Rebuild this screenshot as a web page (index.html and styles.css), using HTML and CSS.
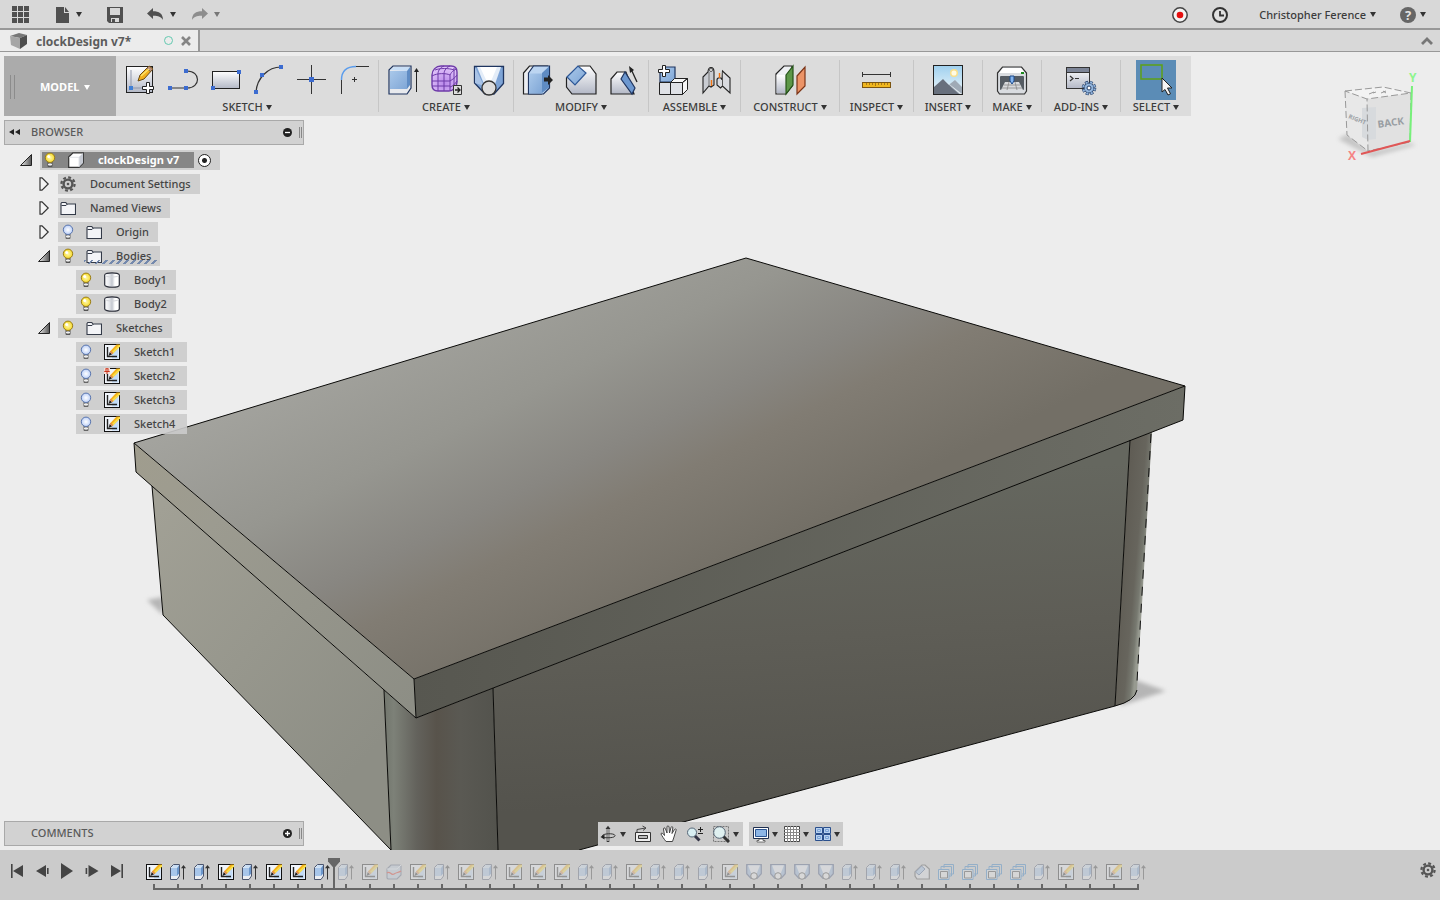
FILE: index.html
```html
<!DOCTYPE html>
<html lang="en">
<head>
<meta charset="utf-8">
<title>clockDesign v7*</title>
<link rel="stylesheet" href="styles.css">
</head>
<body>
<svg class="defs" aria-hidden="true">
  <defs>
    <linearGradient id="g-blue" x1="0" y1="0" x2="1" y2="1"><stop offset="0" stop-color="#a9c8ea"/><stop offset="1" stop-color="#7fa6d6"/></linearGradient>
    <linearGradient id="g-pale" x1="0" y1="0" x2="0" y2="1"><stop offset="0" stop-color="#ffffff"/><stop offset="1" stop-color="#b3b8c6"/></linearGradient>
    <linearGradient id="g-sky" x1="0" y1="0" x2="0" y2="1"><stop offset="0" stop-color="#9fd0ee"/><stop offset="1" stop-color="#eef7fb"/></linearGradient>
    <linearGradient id="g-cyl" x1="0" y1="0" x2="1" y2="0"><stop offset="0" stop-color="#fff"/><stop offset=".3" stop-color="#e8eaee"/><stop offset=".5" stop-color="#c3c7cf"/><stop offset=".7" stop-color="#fff"/></linearGradient>
    <linearGradient id="g-tri" x1="0" y1="0" x2="1" y2="0"><stop offset="0" stop-color="#eee"/><stop offset="1" stop-color="#555"/></linearGradient>
    <radialGradient id="g-lit"><stop offset="0" stop-color="#fff9b0"/><stop offset="1" stop-color="#f6d929"/></radialGradient>
    <radialGradient id="g-off"><stop offset="0" stop-color="#ffffff"/><stop offset="1" stop-color="#bcd0f8"/></radialGradient>
    <radialGradient id="g-purple" cx=".5" cy=".7" r=".7"><stop offset="0" stop-color="#b887ea"/><stop offset="1" stop-color="#e2c6fa"/></radialGradient>
  </defs>
  <symbol id="i-sketch" viewBox="0 0 16 16"><rect x=".5" y=".5" width="15" height="15" fill="#f1f5fb" stroke="#111"/><path d="M8 14.500V9l6.500-5v10.500z" fill="#c3dcf7"/><path d="M3.500 3v9.500H13" fill="none" stroke="#222" stroke-width="1.400"/><path d="M4.500 12l1.200-4 2.600 2.200z" fill="#222"/><path d="M6 7.500L12.500.5H16v2L8.500 10z" fill="#f5b21a"/><path d="M7.200 8.700L15 1h1v1.500L8.500 10z" fill="#f9e04a"/><path d="M5.700 8l1.100-1.300 2.600 2.400-1.300 1.200z" fill="#dd8a50"/></symbol>
  <symbol id="i-extrude" viewBox="0 0 16 16"><path d="M.5 3.500l3-3h6v11.500l-2.500 3.500H.5z" fill="#eceef2" stroke="#4b556e"/><path d="M1 4h6v8H1z" fill="#a8c6ea"/><path d="M1.300 3.800L3.700 1h5.200L7 3.800z" fill="#c9def5"/><path d="M7 4l2-2.700v8.500L7 12z" fill="#6c97cb"/><path d="M13.500 2v13.500" stroke="#333"/><path d="M11 4.200L13.500 1 16 4.200z" fill="#333"/></symbol>
  <symbol id="i-loft" viewBox="0 0 16 16"><path d="M.7.7h14.600v9L11 14.500H5L.7 9.700z" fill="#8fb0dc" stroke="#3b4d78" stroke-width="1.200"/><path d="M2 1.300h12L10.500 10h-5z" fill="#edf3fb"/><circle cx="8" cy="12" r="3.300" fill="#f4f4f4" stroke="#333"/></symbol>
  <symbol id="i-form" viewBox="0 0 16 16"><path d="M1 5l4-4h9l1 1v9l-4 4H2l-1-1z" fill="#bccce0" stroke="#55617a" stroke-width="1.100"/><path d="M1 5h10l4-4" fill="none" stroke="#e9f0fa"/><path d="M1 9c3-3 4 3 7 1s4-1 7-3" fill="none" stroke="#e0210d" stroke-width="1.200"/></symbol>
  <symbol id="i-fillet" viewBox="0 0 16 16"><path d="M1 8l7-7h3l4.300 4v10H3l-2-3z" fill="#e3e5ea" stroke="#444" stroke-width="1.200"/><path d="M1.500 8l6-6L11 5l-6 6z" fill="#9fc0e8" stroke="#3b5b90"/></symbol>
  <symbol id="i-pattern" viewBox="0 0 16 16"><path d="M6 4V.5h9.500V10H12" fill="none" stroke="#2277c4"/><path d="M3 5.500v-3h10.500V12H11" fill="none" stroke="#2277c4"/><path d="M.5 5.500h10.500v10H.5z" fill="#d9e4f0" stroke="#2277c4"/><path d="M2.500 7.500h7v6.500h-7z" fill="#eee" stroke="#333"/></symbol>
  <symbol id="i-lit" viewBox="0 0 16 16"><path d="M6 10h4v4.500H6z" fill="#aaa" stroke="#555"/><path d="M6 12.500h4" stroke="#eee"/><circle cx="8" cy="5.800" r="4.700" fill="url(#g-lit)" stroke="#9a7d18"/><circle cx="6.700" cy="4.500" r="1.500" fill="#fff"/></symbol>
  <symbol id="i-off" viewBox="0 0 16 16"><path d="M6 10h4v4.500H6z" fill="#bbb" stroke="#666"/><path d="M6 12.500h4" stroke="#eee"/><circle cx="8" cy="5.800" r="4.700" fill="url(#g-off)" stroke="#5a76ae"/></symbol>
  <symbol id="i-folder" viewBox="0 0 16 16"><path d="M1 3.500l.8-1h4l1 1.500h8.700v10.500H1z" fill="#f3f4f7" stroke="#333a48" stroke-width="1.100"/><path d="M1.500 5.500h4.500L7.500 4" fill="none" stroke="#333a48"/></symbol>
  <symbol id="i-cyl" viewBox="0 0 16 16"><path d="M.7 3C.7.2 15.300.2 15.300 3v10c0 3-14.600 3-14.600 0z" fill="url(#g-cyl)" stroke="#2c2f3a" stroke-width="1.200"/><path d="M1.200 3.500c2 2 11.600 2 13.600 0" fill="none" stroke="#d3d5da"/></symbol>
  <symbol id="i-box" viewBox="0 0 16 16"><path d="M.7 5L5 .8h10.300V11L11 15.300H.7z" fill="#fff" stroke="#333" stroke-width="1.200"/><path d="M11 5l4-4v10l-4 4z" fill="#c6cad3"/><path d="M1.300 5.300H11v9.500" fill="none" stroke="#e2e4e8"/></symbol>
  <symbol id="i-gear" viewBox="0 0 16 16"><circle cx="8" cy="8" r="6.600" fill="none" stroke="#555" stroke-width="2.200" stroke-dasharray="2.900 2.280"/><circle cx="8" cy="8" r="4.400" fill="none" stroke="#555" stroke-width="2.400"/><circle cx="8" cy="8" r="1.300" fill="#555"/></symbol>
  <symbol id="i-open" viewBox="0 0 12 12"><path d="M.5 11.500L11.500.5v11z" fill="url(#g-tri)" stroke="#222"/></symbol>
  <symbol id="i-closed" viewBox="0 0 10 14"><path d="M1 .8h2L9.200 7 3 13.200H1z" fill="#f4f4f4" stroke="#333" stroke-width="1.200"/></symbol>
</svg>

<header class="topbar">
  <button class="tool t-grid" aria-label="Data panel"><svg width="17" height="17" viewBox="0 0 17 17"><path d="M0 0h5v5H0zM6 0h5v5H6zM12 0h5v5h-5zM0 6h5v5H0zM6 6h5v5H6zM12 6h5v5h-5zM0 12h5v5H0zM6 12h5v5H6zM12 12h5v5h-5z" fill="#505050"/></svg></button>
  <button class="tool t-file caret" aria-label="File"><svg width="14" height="16" viewBox="0 0 14 16"><path d="M0 0h8v6h5v10H0z" fill="#505050"/><path d="M9 0l4 5H9z" fill="#505050"/></svg></button>
  <button class="tool t-save" aria-label="Save"><svg width="16" height="16" viewBox="0 0 16 16"><path d="M0 0h16v16H2l-2-2z" fill="#505050"/><path d="M3 1h10v7H3zM4 11h8v4H4z" fill="#d8d8d8"/><path d="M5 12h3v3H5z" fill="#505050"/></svg></button>
  <button class="tool t-undo caret" aria-label="Undo"><svg width="17" height="13" viewBox="0 0 17 13"><path d="M6 0v3.200c6 0 10 2.200 10 8.800-2-3.400-5-4.300-10-4.200V11L0 5.500z" fill="#505050"/></svg></button>
  <button class="tool caret faint" aria-label="Redo"><svg width="17" height="13" viewBox="0 0 17 13"><path d="M11 0v3.200C5 3.200 1 5.400 1 12c2-3.400 5-4.300 10-4.200V11l6-5.500z" fill="#8d8d8d"/></svg></button>
  <div class="account">
    <button class="tool" aria-label="Record"><svg width="16" height="16" viewBox="0 0 16 16"><circle cx="8" cy="8" r="7.200" fill="#f4f4f4" stroke="#444" stroke-width="1.500"/><circle cx="8" cy="8" r="3.300" fill="#e60f0f"/></svg></button>
    <button class="tool t-clock" aria-label="Job status"><svg width="16" height="16" viewBox="0 0 16 16"><circle cx="8" cy="8" r="7" fill="#e0e0e0" stroke="#333" stroke-width="2"/><path d="M8 4v4.500h4" fill="none" stroke="#333" stroke-width="1.800"/></svg></button>
    <button class="tool t-user caret">Christopher Ference</button>
    <button class="tool caret t-help" aria-label="Help"><span class="help">?</span></button>
  </div>
</header>

<nav class="tabs">
  <div class="tab">
    <svg width="17" height="16" viewBox="0 0 17 16"><path d="M0 3l9-3 8 2-7 3z" fill="#777"/><path d="M0 3l10 2v11L1 12z" fill="#a6a6a6"/><path d="M10 5l7-3v9l-7 5z" fill="#4e4e4e"/></svg>
    <span class="tab-name">clockDesign v7*</span>
    <span class="status"></span>
    <button class="close" aria-label="Close tab"><svg width="10" height="10" viewBox="0 0 10 10"><path d="M1 1l8 8M9 1L1 9" stroke="#858585" stroke-width="2.600"/></svg></button>
  </div>
  <button class="collapse" aria-label="Collapse"><svg width="12" height="8" viewBox="0 0 12 8"><path d="M1 7l5-5 5 5" fill="none" stroke="#777" stroke-width="2.800"/></svg></button>
</nav>

<main class="viewport">
  <svg class="scene" viewBox="0 52 1440 798" preserveAspectRatio="xMidYMid slice" aria-hidden="true">
    <defs>
      <linearGradient id="s-top" gradientUnits="userSpaceOnUse" x1="390" y1="315" x2="554" y2="651"><stop offset="0" stop-color="#a4a49f"/><stop offset=".35" stop-color="#969690"/><stop offset=".58" stop-color="#888681"/><stop offset=".72" stop-color="#817c73"/><stop offset="1" stop-color="#736f66"/></linearGradient>
      <linearGradient id="s-lidl" gradientUnits="userSpaceOnUse" x1="134" y1="440" x2="416" y2="700"><stop offset="0" stop-color="#a09d8e"/><stop offset=".3" stop-color="#9c9b90"/><stop offset="1" stop-color="#8d8e85"/></linearGradient>
      <linearGradient id="s-lidf" gradientUnits="userSpaceOnUse" x1="414" y1="0" x2="1185" y2="0"><stop offset="0" stop-color="#575750"/><stop offset="1" stop-color="#6c6d65"/></linearGradient>
      <linearGradient id="s-left" gradientUnits="userSpaceOnUse" x1="150" y1="520" x2="390" y2="730"><stop offset="0" stop-color="#a1a095"/><stop offset="1" stop-color="#8d8e85"/></linearGradient>
      <linearGradient id="s-front" gradientUnits="userSpaceOnUse" x1="850" y1="480" x2="870" y2="790"><stop offset="0" stop-color="#65675f"/><stop offset=".5" stop-color="#5e5d56"/><stop offset="1" stop-color="#54534d"/></linearGradient>
      <linearGradient id="s-curve" gradientUnits="userSpaceOnUse" x1="386" y1="0" x2="496" y2="0"><stop offset="0" stop-color="#74786f"/><stop offset=".07" stop-color="#7d8178"/><stop offset=".28" stop-color="#63625c"/><stop offset=".46" stop-color="#58534b"/><stop offset=".68" stop-color="#5a5953"/><stop offset="1" stop-color="#53534d"/></linearGradient>
      <linearGradient id="s-curver" gradientUnits="userSpaceOnUse" x1="1122" y1="560" x2="1145" y2="562"><stop offset="0" stop-color="#605d55"/><stop offset=".6" stop-color="#67655d"/><stop offset=".85" stop-color="#777970"/><stop offset="1" stop-color="#979a90"/></linearGradient>
      <filter id="blur"><feGaussianBlur stdDeviation="2"/></filter>
    </defs>
    <path d="M147 600l16-3v18zM1130 678l36 13-46 15z" fill="#b5b5b5" filter="url(#blur)"/>
    <path d="M152 486l11 129 228 235-7-160z" fill="url(#s-left)"/>
    <path d="M384 690l32 28 77-30 5 162H391z" fill="url(#s-curve)"/>
    <path d="M493 688L1130 440 1115 706 579 850h-81z" fill="url(#s-front)"/>
    <path d="M1130 440l22-8-15 258q-2 11-22 16z" fill="url(#s-curver)"/>
    <path d="M134 443l280 236 2 39L136 472z" fill="url(#s-lidl)"/>
    <path d="M414 679l771-293-2 34L416 718z" fill="url(#s-lidf)"/>
    <path d="M134 443l612-185 439 128-771 293z" fill="url(#s-top)"/>
    <path d="M134 443l612-185 439 128-771 293zM134 443l2 29 280 246-2-39M416 718l767-298 2-34M152 486l11 129 228 235M384 690l7 160M493 688l5 162M1130 440l-15 266M579 850L1115 706q20-5 22-16" fill="none" stroke="#0a0a08"/>
    <path d="M1151 434l-14 248" fill="none" stroke="#111" stroke-dasharray="9 8"/>
  </svg>

  <div class="viewcube">
    <svg width="90" height="100" viewBox="1335 66 90 100" role="img" aria-label="View cube">
      <path d="M1338 139l10-5 22 18 40-9 6 2-44 12z" fill="#c4c4c4" filter="url(#blur)"/>
      <path d="M1345 91l38-4 28 6-43 6z" fill="#f3f3f3"/><path d="M1345 91l22 8 1 52-21-16z" fill="#e8e8e8"/><path d="M1367 99l44-6-1 49-42 9z" fill="#e1e1e1"/>
      <path d="M1362 108l14-1v32l-8 1-6-3z" fill="#d7dadd"/>
      <path d="M1345 91l38-4 28 6-44 6zM1345 91l2 44 21 16-1-52M1411 93l-1 49-42 9" fill="none" stroke="#999" stroke-dasharray="7 3"/>
      <path d="M1369 94l5-2M1373 93l3-1M1381 93l5-2M1383 91l3 2" stroke="#999"/>
      <path d="M1412 86l-2 56" stroke="#77f07a" stroke-width="2"/><path d="M1361 154l49-13" stroke="#e05656" stroke-width="2"/>
      <text x="1409" y="82" class="axis" fill="#8df58d">Y</text><text x="1348" y="160" class="axis" fill="#f58484">X</text>
      <text class="face" transform="translate(1378 128) rotate(-8)">BACK</text>
      <text class="face small" transform="translate(1348 118) rotate(22)">RIGHT</text>
    </svg>
  </div>

  <div class="ribbon">
    <button class="workspace caret"><span class="grip"></span>MODEL</button>
    <section class="group w-sketch"><div class="icons">
      <button aria-label="Create sketch"><svg viewBox="0 0 32 32"><rect x="2.500" y="2.500" width="26" height="26" fill="url(#g-pale)" stroke="#222"/><path d="M7 6v18h15" fill="none" stroke="#8f97aa"/><path d="M5 22h4v4H5z" fill="#3f7fd6"/><path d="M14 17l2-6L25 2l4 3-9 10z" fill="#f2b01e" stroke="#6b4b13"/><path d="M25 2l4 3-2.500 2.500-4-3z" fill="#b98f7c" stroke="#6b4b13" stroke-width=".7"/><path d="M17 12L25 5" stroke="#fbe36b" stroke-width="1.500"/><path d="M22.500 18.500h3v4h4v3h-4v4h-3v-4h-4v-3h4z" fill="#fff" stroke="#222"/></svg></button>
      <button aria-label="Line"><svg viewBox="0 0 32 32"><path d="M3 24h17c14 0 14-17 0-17" fill="none" stroke="#333" stroke-width="1.200"/><path d="M1 22h4v4H1zM17 22h4v4h-4zM17 5h4v4h-4z" fill="#3c6cd0"/></svg></button>
      <button aria-label="Rectangle"><svg viewBox="0 0 32 32"><rect x="2.500" y="7.500" width="27" height="17" fill="url(#g-pale)" stroke="#222"/><path d="M1 22h4v4H1zM27 6h4v4h-4z" fill="#3c6cd0"/></svg></button>
      <button aria-label="Arc"><svg viewBox="0 0 32 32"><path d="M3 28C4 14 15 3 28 3" fill="none" stroke="#333" stroke-width="1.200"/><path d="M1 26h4v4H1zM7 9h4v4H7zM26 1h4v4h-4z" fill="#3c6cd0"/></svg></button>
      <button aria-label="Point"><svg viewBox="0 0 32 32"><path d="M15.500 1v29M1 15.500h29" stroke="#333"/><path d="M13 13h5v5h-5z" fill="#3c6cd0"/></svg></button>
      <button aria-label="Sketch fillet"><svg viewBox="0 0 32 32"><path d="M2.500 16v14M17 2.500h13M13 15.500h5M15.500 13v5" stroke="#333"/><path d="M2.500 16C2.500 7 7.500 2.500 17 2.500" fill="none" stroke="#5a9cec" stroke-width="1.400"/></svg></button>
    </div><button class="label caret">SKETCH</button></section>
    <section class="group w-three"><div class="icons">
      <button aria-label="Extrude"><svg viewBox="0 0 32 32"><path d="M2 6l4-4h18v22l-4 6H2z" fill="#e8eaee" stroke="#1f3560" stroke-width="1.200"/><path d="M3 7h17v18H3z" fill="url(#g-blue)"/><path d="M3 6l4-3h16l-3 4z" fill="#c8def6"/><path d="M20 7l3-4v18l-3 4z" fill="#5f8cc4"/><path d="M29.500 7v21" stroke="#222"/><path d="M27 8l2.500-4L32 8z" fill="#222"/></svg></button>
      <button aria-label="Create form"><svg viewBox="0 0 32 32"><path d="M2 11c0-5 4-9 9-9h10c4 0 6 2 6 6v10c0 5-4 9-8 9H8c-4 0-6-2-6-6z" fill="url(#g-purple)" stroke="#6d3aa8" stroke-width="1.400"/><path d="M2 12c5-3 14-3 18-1 2-4 4-5 7-6M20 11v15M8 10v17M14 10v17M2 17h18M2 22h18M20 17c3-2 5-3 7-6M20 23c3-1 5-3 7-6M5 6c5-2 14-2 19 0M8 10c0-4 3-7 6-8M14 10c0-4 3-7 6-8M24 4v19" fill="none" stroke="#6d3aa8"/><path d="M23.500 21.500h8v9h-8z" fill="#ddd" stroke="#333"/><path d="M25 26h5M27.500 23.500L30 26l-2.500 2.500" fill="none" stroke="#222" stroke-width="1.300"/></svg></button>
      <button aria-label="Loft"><svg viewBox="0 0 32 32"><path d="M1.500 2.500h29v17L21 30h-9L1.500 19z" fill="#7ea4d6" stroke="#1f3560" stroke-width="1.300"/><path d="M4 3h24l-6 17h-11z" fill="#e4edf8"/><path d="M7 3l9 19 8-19z" fill="#fff"/><path d="M2 3v16l9 3z" fill="#a9c3e6"/><circle cx="16" cy="24" r="7" fill="#ddd" stroke="#333" stroke-width="1.300"/></svg></button>
    </div><button class="label caret">CREATE</button></section>
    <section class="group w-three"><div class="icons">
      <button aria-label="Press pull"><svg viewBox="0 0 32 32"><path d="M1.500 9l6-7h18v22l-6 6h-18z" fill="#eceef2" stroke="#222" stroke-width="1.200"/><path d="M6.500 9l5-7h16v22l-6 6h-15z" fill="#bcd5f1" stroke="#1f3560" stroke-width="1.200"/><path d="M7 9.500h13v20H7z" fill="url(#g-blue)"/><path d="M20 9l7-6.500v21L20 29z" fill="#5f8cc4"/><path d="M22 13.500h4V11l5 5-5 5v-3.500h-4z" fill="#222"/></svg></button>
      <button aria-label="Fillet"><svg viewBox="0 0 32 32"><path d="M1.500 14L14 2h11l6 8v20H7l-5.500-7z" fill="url(#g-pale)" stroke="#222" stroke-width="1.200"/><path d="M2 13L13 2l8 7-11 12z" fill="url(#g-blue)" stroke="#2d5796" stroke-width="1.200"/></svg></button>
      <button aria-label="Draft"><svg viewBox="0 0 32 32"><path d="M3 15l6-7h9l8 22H3z" fill="url(#g-pale)" stroke="#222" stroke-width="1.200"/><path d="M13 15l4-7 10 16-3 6z" fill="#6d98d0" stroke="#1f3560" stroke-width="1.200"/><path d="M29 18L23 5" stroke="#222" stroke-width="1.300"/><path d="M21 2l5 4-4 3z" fill="#222"/></svg></button>
    </div><button class="label caret">MODIFY</button></section>
    <section class="group w-two"><div class="icons">
      <button aria-label="New component"><svg viewBox="0 0 32 32"><path d="M3 8l4-5h11v15H3z" fill="url(#g-blue)" stroke="#1f3560" stroke-width="1.200"/><path d="M2.500 18.500h11v12h-11zM13.500 18.500h12v12h-12z" fill="#dfe1e6" stroke="#222"/><path d="M13.500 18.500l4-4h13l-5 4zM25.500 18.500l5-4v11l-5 5z" fill="#f7f7f7" stroke="#222"/><path d="M5.500 1.500h3v4h4v3h-4v4h-3v-4h-4v-3h4z" fill="#fff" stroke="#222"/></svg></button>
      <button aria-label="Joint"><svg viewBox="0 0 32 32"><path d="M3 13l5-5c0-6 6-6 6 0v13l-3 2-2-1-6 7z" fill="#c9ccd2" stroke="#222" stroke-width="1.100"/><path d="M9 8v14" stroke="#777"/><circle cx="11" cy="6" r="1.500" fill="#fff" stroke="#555"/><path d="M17 16c0-3 5-3 5 0l.5-9 7.500 7v15l-7.500-7-2 2-3.500-3z" fill="#d9dbe0" stroke="#222" stroke-width="1.100"/><path d="M22.500 8v14" stroke="#555"/><path d="M11.500 16v6M19.500 9v5" stroke="#f07412" stroke-width="1.400"/></svg></button>
    </div><button class="label caret">ASSEMBLE</button></section>
    <section class="group w-construct"><div class="icons">
      <button aria-label="Offset plane"><svg viewBox="0 0 32 32"><path d="M2 10l8-8h8v20l-6 8H2z" fill="#eef0f3" stroke="#222" stroke-width="1.200"/><path d="M2.500 11h9v18h-9z" fill="url(#g-pale)"/><path d="M12 11l7-9v19l-7 9z" fill="#5c9748" stroke="#245218" stroke-width="1.200"/><path d="M23 12l8-9v19l-8 8z" fill="#ec9467" stroke="#7c3518" stroke-width="1.200"/></svg></button>
    </div><button class="label caret">CONSTRUCT</button></section>
    <section class="group w-inspect"><div class="icons">
      <button aria-label="Measure"><svg viewBox="0 0 32 32"><path d="M1.500 8v5M29.500 8v5M1 10.500h28" stroke="#333"/><rect x="1.500" y="18.500" width="28" height="5" fill="#f0b71f" stroke="#7b5410"/><path d="M5.500 19v2M8.500 19v2M11.500 19v2M14.500 19v3M17.500 19v2M20.500 19v2M23.500 19v2M26.500 19v2" stroke="#a8781a"/></svg></button>
    </div><button class="label caret">INSPECT</button></section>
    <section class="group w-insert"><div class="icons">
      <button aria-label="Insert decal"><svg viewBox="0 0 32 32"><rect x="1.500" y="1.500" width="29" height="29" fill="url(#g-sky)" stroke="#222"/><circle cx="22" cy="9" r="3.300" fill="#fffbe4" stroke="#f8df8c" stroke-width="1.500"/><path d="M14 23l9-7 7 7v7H16z" fill="#9faab6"/><path d="M2 23l9-8 9 9 7 6H2z" fill="#68707d"/><path d="M12 16l16 14h2z" fill="#e6edf2"/></svg></button>
    </div><button class="label caret">INSERT</button></section>
    <section class="group w-make"><div class="icons">
      <button aria-label="3D print"><svg viewBox="0 0 32 32"><path d="M1.500 9l5-6h19l5 6v18l-2 3h-25l-2-3z" fill="#d9dce0" stroke="#333" stroke-width="1.200"/><path d="M7 4h18l4 5H3z" fill="#fff"/><rect x="4" y="12" width="24" height="14" rx="1" fill="#555c63"/><path d="M9 18h14l4 8H5z" fill="#d8dadd"/><path d="M8 21h16M6 24h20M13 18l-2 8M19 18l2 8" stroke="#888" stroke-width=".8"/><path d="M14 12h4v5l-2 3-2-3z" fill="#83b4ee" stroke="#1c4a8c"/><path d="M25 8h3v2h-3z" fill="#1d8a1d"/></svg></button>
    </div><button class="label caret">MAKE</button></section>
    <section class="group w-addins"><div class="icons">
      <button aria-label="Scripts and add-ins"><svg viewBox="0 0 32 32"><rect x="1.500" y="3.500" width="23" height="21" fill="url(#g-pale)" stroke="#333"/><path d="M2 4h22v4H2z" fill="#7c8496"/><path d="M1.500 8.500h23" stroke="#333"/><path d="M5 12l3 2.500L5 17M10 14.500h4" fill="none" stroke="#333" stroke-width="1.200"/><circle cx="24" cy="24" r="5.800" fill="none" stroke="#233d66" stroke-width="3" stroke-dasharray="3 1.550"/><circle cx="24" cy="24" r="5" fill="#93b5dc" stroke="#233d66"/><circle cx="24" cy="24" r="5.800" fill="none" stroke="#93b5dc" stroke-width="2" stroke-dasharray="2 2.550" stroke-dashoffset="-.5"/><circle cx="24" cy="24" r="2" fill="#fff" stroke="#233d66"/></svg></button>
    </div><button class="label caret">ADD-INS</button></section>
    <section class="group w-select"><div class="icons">
      <button class="active" aria-label="Select"><svg viewBox="0 0 40 40"><rect x="5" y="5" width="21" height="14" fill="none" stroke="#5da016" stroke-width="1.500"/><path d="M26 18v14l3-2.500 3 5.500 2.500-1.200L31.500 28H36z" fill="#f5f5f5" stroke="#222"/></svg></button>
    </div><button class="label caret">SELECT</button></section>
  </div>

  <div class="panel">
    <button class="rewind" aria-label="Hide browser"><svg width="11" height="6" viewBox="0 0 11 6"><path d="M5 0v6L0 3zM11 0v6L6 3z" fill="#222"/></svg></button>
    <h2>BROWSER</h2>
    <button class="dot" aria-label="Collapse browser"><svg width="9" height="9" viewBox="0 0 9 9"><circle cx="4.500" cy="4.500" r="4.500" fill="#222"/><path d="M2 4.500h5" stroke="#fff" stroke-width="1.300"/></svg></button>
    <span class="edge"></span>
  </div>

  <ul class="tree">
    <li class="node root"><svg class="twist"><use href="#i-open"/></svg><div class="bar"><div class="picked"><svg><use href="#i-lit"/></svg><svg><use href="#i-box"/></svg><span>clockDesign v7</span></div><input class="activate" type="radio" checked aria-label="Activate clockDesign v7"></div></li>
    <li class="node l1"><svg class="twist"><use href="#i-closed"/></svg><div class="bar"><svg><use href="#i-gear"/></svg><span>Document Settings</span></div></li>
    <li class="node l1"><svg class="twist"><use href="#i-closed"/></svg><div class="bar"><svg><use href="#i-folder"/></svg><span>Named Views</span></div></li>
    <li class="node l1"><svg class="twist"><use href="#i-closed"/></svg><div class="bar"><svg><use href="#i-off"/></svg><svg><use href="#i-folder"/></svg><span>Origin</span></div></li>
    <li class="node l1"><svg class="twist"><use href="#i-open"/></svg><div class="bar flagged"><svg><use href="#i-lit"/></svg><svg><use href="#i-folder"/></svg><span>Bodies</span></div></li>
    <li class="node l2"><div class="bar"><svg><use href="#i-lit"/></svg><svg><use href="#i-cyl"/></svg><span>Body1</span></div></li>
    <li class="node l2"><div class="bar"><svg><use href="#i-lit"/></svg><svg><use href="#i-cyl"/></svg><span>Body2</span></div></li>
    <li class="node l1"><svg class="twist"><use href="#i-open"/></svg><div class="bar"><svg><use href="#i-lit"/></svg><svg><use href="#i-folder"/></svg><span>Sketches</span></div></li>
    <li class="node l2"><div class="bar sk"><svg><use href="#i-off"/></svg><svg><use href="#i-sketch"/></svg><span>Sketch1</span></div></li>
    <li class="node l2"><div class="bar sk"><svg><use href="#i-off"/></svg><svg viewBox="0 0 16 16"><use href="#i-sketch"/><path d="M0 0h6v6H0z" fill="#f6dcd4"/><path d="M1.500.7h3M2 1v2M4 1v2M.3 3.500h5.400M3 3.500V6" stroke="#c9341c"/></svg><span>Sketch2</span></div></li>
    <li class="node l2"><div class="bar sk"><svg><use href="#i-off"/></svg><svg><use href="#i-sketch"/></svg><span>Sketch3</span></div></li>
    <li class="node l2"><div class="bar sk"><svg><use href="#i-off"/></svg><svg><use href="#i-sketch"/></svg><span>Sketch4</span></div></li>
  </ul>

  <div class="dock">
    <div class="panel comments">
      <h2>COMMENTS</h2>
      <button class="dot" aria-label="Expand comments"><svg width="9" height="9" viewBox="0 0 9 9"><circle cx="4.500" cy="4.500" r="4.500" fill="#222"/><path d="M2 4.500h5M4.500 2v5" stroke="#fff" stroke-width="1.300"/></svg></button>
      <span class="edge"></span>
    </div>
    <div class="navbars">
      <div class="navbar">
        <button class="caret" aria-label="Orbit"><svg viewBox="0 0 18 18"><path d="M9 3v14" stroke="#333" stroke-width="2.600"/><path d="M9 3v13" stroke="#fff"/><path d="M6.500 4L9 .8 11.500 4z" fill="#333"/><path d="M3 11.500C3 8 16 8 16 10.500S9 13 4 12.500" fill="none" stroke="#333"/><path d="M1.500 12l4-2.500v5z" fill="#222"/></svg></button>
        <button aria-label="Look at"><svg viewBox="0 0 18 18"><path d="M1.500 7.500h15v9h-15z" fill="#eee" stroke="#333"/><path d="M4.500 10.500h9v3h-9z" fill="#bbb" stroke="#333"/><path d="M3 7V4.500L11.500 3M8.500 1l3.500 2-3 2.500" fill="none" stroke="#444"/></svg></button>
        <button aria-label="Pan"><svg viewBox="0 0 18 18"><path d="M6 16.500C4 14 2 11 1 9c0-1.500 2-1 3.500 1.500L3.500 4c0-1.500 1.600-1.500 2 0L7 8V2c0-1.500 1.800-1.500 2 0l.5 6L11 2.500c.4-1.400 2-1 1.800.4L12 8.500l2.500-4c.8-1.200 2-.4 1.600.7L14 12l-1.500 4.500z" fill="#fff" stroke="#444"/></svg></button>
        <button aria-label="Zoom"><svg viewBox="0 0 18 18"><path d="M8.500 10.500l5 5" stroke="#334" stroke-width="3"/><circle cx="6" cy="7.500" r="4.500" fill="#d9eef2" stroke="#567"/><path d="M12 4.500h5M14.500 2v5M12 8.500h5" stroke="#222"/></svg></button>
        <button class="caret" aria-label="Fit"><svg viewBox="0 0 18 18"><path d="M1.500 1.500h15v15h-15z" fill="none" stroke="#777" stroke-dasharray="2 1"/><path d="M11 11l6 6" stroke="#333" stroke-width="3"/><circle cx="7.500" cy="7.500" r="5.800" fill="#dff0f0" stroke="#567"/></svg></button>
      </div>
      <div class="navbar second">
        <button class="caret" aria-label="Display settings"><svg viewBox="0 0 18 18"><path d="M1.500 2.500h15v11h-15z" fill="#fff" stroke="#1f2f50"/><path d="M3.500 4.500h11v7h-11z" fill="#8db6e6" stroke="#2c5591"/><path d="M7 14h4v1.500h2v1.500H5v-1.500h2z" fill="#fff" stroke="#444" stroke-width=".7"/></svg></button>
        <button class="caret" aria-label="Grid and snaps"><svg viewBox="0 0 18 18"><path d="M1.500 1.500h15v15h-15z" fill="#fff" stroke="#444"/><path d="M4.500 1v16M7.500 1v16M10.500 1v16M13.500 1v16M1 4.500h16M1 7.500h16M1 10.500h16M1 13.500h16" stroke="#888"/></svg></button>
        <button class="caret" aria-label="Viewports"><svg viewBox="0 0 18 18"><path d="M1.500 2.500h7v6h-7zM9.500 2.500h7v6h-7zM1.500 9.500h7v6h-7zM9.500 9.500h7v6h-7z" fill="#b9d2f0" stroke="#2a4f8c"/><path d="M3.500 4.500h3v2h-3zM11.500 4.500h3v2h-3zM3.500 11.500h3v2h-3zM11.500 11.500h3v2h-3z" fill="none" stroke="#7ba3d6"/></svg></button>
      </div>
    </div>
  </div>
</main>

<footer class="timeline">
  <div class="play">
    <button aria-label="Go to start"><svg width="14" height="16" viewBox="0 0 14 16"><path d="M1 1h1.600v14H1zM13 2v12L3 8z" fill="#444"/></svg></button>
    <button aria-label="Step back"><svg width="14" height="16" viewBox="0 0 14 16"><path d="M11 2v12L1 8zM12 5h1.600v6H12z" fill="#444"/></svg></button>
    <button aria-label="Play"><svg width="14" height="16" viewBox="0 0 14 16"><path d="M1 0l12 8-12 8z" fill="#444"/></svg></button>
    <button aria-label="Step forward"><svg width="14" height="16" viewBox="0 0 14 16"><path d="M3.500 2v12l10-6zM.6 5h1.600v6H.6z" fill="#444"/></svg></button>
    <button aria-label="Go to end"><svg width="14" height="16" viewBox="0 0 14 16"><path d="M11.400 1H13v14h-1.600zM1 2v12l10-6z" fill="#444"/></svg></button>
  </div>
  <div class="history">
    <ol class="features">
      <li><svg><use href="#i-sketch"/></svg></li><li><svg><use href="#i-extrude"/></svg></li><li><svg><use href="#i-extrude"/></svg></li><li><svg><use href="#i-sketch"/></svg></li><li><svg><use href="#i-extrude"/></svg></li><li><svg><use href="#i-sketch"/></svg></li><li><svg><use href="#i-sketch"/></svg></li><li><svg><use href="#i-extrude"/></svg></li>
      <li class="later"><span class="marker"></span><svg><use href="#i-extrude"/></svg></li>
      <li class="later"><svg><use href="#i-sketch"/></svg></li><li class="later"><svg><use href="#i-form"/></svg></li><li class="later"><svg><use href="#i-sketch"/></svg></li><li class="later"><svg><use href="#i-extrude"/></svg></li><li class="later"><svg><use href="#i-sketch"/></svg></li><li class="later"><svg><use href="#i-extrude"/></svg></li><li class="later"><svg><use href="#i-sketch"/></svg></li><li class="later"><svg><use href="#i-sketch"/></svg></li><li class="later"><svg><use href="#i-sketch"/></svg></li><li class="later"><svg><use href="#i-extrude"/></svg></li><li class="later"><svg><use href="#i-extrude"/></svg></li><li class="later"><svg><use href="#i-sketch"/></svg></li><li class="later"><svg><use href="#i-extrude"/></svg></li><li class="later"><svg><use href="#i-extrude"/></svg></li><li class="later"><svg><use href="#i-extrude"/></svg></li><li class="later"><svg><use href="#i-sketch"/></svg></li><li class="later"><svg><use href="#i-loft"/></svg></li><li class="later"><svg><use href="#i-loft"/></svg></li><li class="later"><svg><use href="#i-loft"/></svg></li><li class="later"><svg><use href="#i-loft"/></svg></li><li class="later"><svg><use href="#i-extrude"/></svg></li><li class="later"><svg><use href="#i-extrude"/></svg></li><li class="later"><svg><use href="#i-extrude"/></svg></li><li class="later"><svg><use href="#i-fillet"/></svg></li><li class="later"><svg><use href="#i-pattern"/></svg></li><li class="later"><svg><use href="#i-pattern"/></svg></li><li class="later"><svg><use href="#i-pattern"/></svg></li><li class="later"><svg><use href="#i-pattern"/></svg></li><li class="later"><svg><use href="#i-extrude"/></svg></li><li class="later"><svg><use href="#i-sketch"/></svg></li><li class="later"><svg><use href="#i-extrude"/></svg></li><li class="later"><svg><use href="#i-sketch"/></svg></li><li class="later"><svg><use href="#i-extrude"/></svg></li>
    </ol>
    <div class="track"></div>
  </div>
  <button class="prefs" aria-label="Timeline settings"><svg width="16" height="16"><use href="#i-gear"/></svg></button>
</footer>
</body>
</html>
```
FILE: styles.css
```css
* { box-sizing: border-box; }
html, body { height: 100%; }
body {
  margin: 0;
  display: flex;
  flex-direction: column;
  overflow: hidden;
  background: #ededed;
  color: #3c3c3c;
  font: 500 11px/16px "Noto Sans", "Open Sans", sans-serif;
}
button {
  display: flex;
  align-items: center;
  justify-content: center;
  padding: 0;
  border: 0;
  background: none;
  color: inherit;
  font: inherit;
}
ul, ol { margin: 0; padding: 0; list-style: none; }
svg { display: block; flex: none; }
.defs { position: absolute; width: 0; height: 0; }
.caret::after {
  content: "";
  flex: none;
  border: 3px solid transparent;
  border-top: 5px solid #333;
  border-bottom: 0;
}

/* Application bar */
.topbar {
  display: flex;
  flex: none;
  align-items: center;
  height: 30px;
  padding: 1px 14px 0 12px;
  border-bottom: 2px solid #989898;
  background: #d8d8d8;
}
.tool { gap: 6px; }
.t-grid { margin-right: 27px; }
.t-file { margin-right: 25px; }
.t-save { margin-right: 24px; }
.t-undo { margin-right: 15px; }
.faint::after { border-top-color: #777; }
.account { display: flex; align-items: center; margin-left: auto; }
.t-clock { margin: 0 31px 0 24px; }
.t-user { gap: 4px; margin-right: 24px; }
.t-help { gap: 4px; }
.help {
  width: 16px;
  height: 16px;
  border-radius: 50%;
  background: #666;
  color: #e4e4e4;
  font-size: 13px;
  font-weight: 700;
  line-height: 16px;
}

/* Document tabs */
.tabs {
  display: flex;
  flex: none;
  align-items: stretch;
  justify-content: space-between;
  height: 22px;
  border-bottom: 1px solid #989898;
  background: #d8d8d8;
}
.tab {
  display: flex;
  align-items: center;
  width: 200px;
  padding: 0 7px 0 10px;
  border-right: 2px solid #989898;
  background: #ececec;
}
.tab-name { margin: 2px 0 0 9px; color: #5c5c5c; font-size: 12px; font-weight: 700; }
.status { width: 9px; height: 9px; margin: 0 8px 0 auto; border: 1px solid #63c9b0; border-radius: 50%; }
.collapse { padding: 0 7px; }

/* Modelling area */
.viewport { position: relative; display: flex; flex: 1; flex-direction: column; min-height: 0; padding: 4px; }
.scene { position: absolute; inset: 0; width: 100%; height: 100%; }
.viewcube { position: absolute; top: 14px; right: 15px; }
.axis { font: 700 12px "Open Sans", sans-serif; }
.face { fill: #999ea3; font: 700 10px "Open Sans", sans-serif; }
.face.small { font-size: 6px; }

.ribbon { position: relative; display: flex; align-self: flex-start; height: 60px; background: #dcdcdc; }
.workspace { justify-content: flex-start; gap: 5px; width: 112px; padding: 2px 0 0 6px; background: #ababab; color: #fff; font-weight: 700; }
.workspace::after { border-top-color: #fff; }
.grip { width: 5px; height: 24px; margin-right: 20px; border: solid #8c8c8c; border-width: 0 1px; }
.group { display: flex; flex-direction: column; align-items: center; margin: 4px 0; padding-top: 4px; border-right: 1px solid #c6c6c6; }
.group:last-child { border: 0; }
.icons { display: flex; gap: 11px; height: 31px; }
.icons button { width: 32px; height: 32px; }
.icons svg { width: 32px; height: 32px; }
.icons .active { width: 40px; height: 40px; margin-top: -4px; background: #5b8cb6; }
.icons .active svg { width: 40px; height: 40px; }
.label { gap: 3px; margin-top: 4px; }
.w-sketch { width: 263px; }
.w-three { width: 135px; }
.w-two { width: 92px; }
.w-construct { width: 99px; }
.w-inspect { width: 74px; }
.w-insert { width: 69px; }
.w-make { width: 59px; }
.w-addins { width: 79px; }
.w-select { width: 70px; }

.panel {
  position: relative;
  display: flex;
  align-items: center;
  width: 300px;
  height: 25px;
  margin-top: 4px;
  padding: 0 1px 1px 4px;
  border: 1px solid #a9a9a9;
  background: #d2d2d2;
}
.panel h2 { margin: 0 0 0 11px; color: #5a5a5a; font-size: 11px; font-weight: 500; }
.comments h2 { margin-left: 22px; }
.dot { margin: 0 7px 0 auto; }
.edge { width: 3px; height: 11px; border: solid #888; border-width: 0 1px; }

.tree { position: relative; margin-top: 5px; color: #444; }
.node { display: flex; align-items: center; height: 20px; margin-bottom: 4px; }
.twist { width: 12px; height: 14px; }
.root { padding-left: 16px; }
.l1 { padding-left: 34px; }
.l2 { padding-left: 72px; }
.root .bar, .l1 .bar { margin-left: 8px; }
.bar { display: flex; align-items: center; height: 20px; padding: 0 9px 0 2px; background: #cbcbcbe6; }
.bar.sk { padding-right: 12px; }
.bar svg { width: 16px; height: 16px; }
.bar svg + svg { margin-left: 10px; }
.bar span { margin-left: 14px; }
.picked { display: flex; align-items: center; height: 16px; padding-right: 15px; background: #868686; color: #fff; font-weight: 700; }
.activate {
  width: 13px;
  height: 13px;
  margin: 0 0 0 4px;
  border: 1px solid #222;
  border-radius: 50%;
  background: radial-gradient(#222 0 2px, #fff 3px);
  appearance: none;
}
.flagged { position: relative; }
.flagged::after {
  content: "";
  position: absolute;
  right: 2px;
  bottom: 2px;
  left: 26px;
  height: 4px;
  background: repeating-linear-gradient(135deg, #7489ad 0 2px, transparent 2px 5px);
}

.dock { position: relative; display: grid; grid-template-columns: 1fr auto 1fr; align-items: end; margin-top: auto; }
.comments { margin-top: 0; }
.navbars { display: flex; gap: 6px; }
.navbar { display: flex; align-items: center; gap: 8px; height: 24px; padding: 0 4px 0 1px; background: #cbcbcb; }
.navbar svg { width: 18px; height: 18px; }
.navbar button { gap: 3px; }
.navbar.second { gap: 5px; padding: 0 3px; }
.navbar.second button { gap: 2px; }

/* Timeline */
.timeline { display: flex; flex: none; align-items: flex-start; height: 50px; padding-left: 4px; background: #cbcbcb; }
.play { display: flex; margin-top: 13px; }
.play button { width: 25px; }
.history { margin: 14px 0 0 13px; }
.features { display: flex; }
.features li { position: relative; display: flex; flex-direction: column; align-items: center; width: 24px; }
.features svg { width: 16px; height: 16px; }
.features li::after { content: ""; width: 2px; height: 4px; margin-top: 4px; background: #666; }
.later svg { opacity: .32; }
.marker { position: absolute; top: -6px; left: -1px; width: 2px; height: 30px; background: #666; }
.marker::before {
  content: "";
  position: absolute;
  top: 0;
  left: -5px;
  width: 12px;
  height: 9px;
  background: #666;
  clip-path: polygon(0 0, 100% 0, 100% 40%, 60% 100%, 40% 100%, 0 40%);
}
.track { height: 2px; margin: 0 11px; background: #666; }
.prefs { margin: 12px 4px 0 auto; }
```
